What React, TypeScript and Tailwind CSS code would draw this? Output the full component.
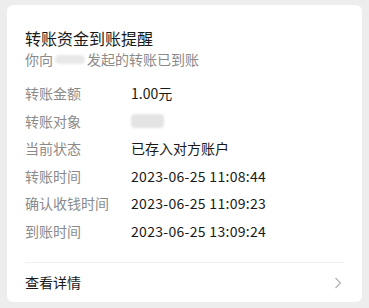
const FONT = "font-['PingFang_SC','Noto_Sans_CJK_SC',sans-serif]";

const rows: { label: string; value: string | null; mono?: boolean }[] = [
  { label: "转账金额", value: "1.00元" },
  { label: "转账对象", value: null },
  { label: "当前状态", value: "已存入对方账户" },
  { label: "转账时间", value: "2023-06-25 11:08:44", mono: true },
  { label: "确认收钱时间", value: "2023-06-25 11:09:23", mono: true },
  { label: "到账时间", value: "2023-06-25 13:09:24", mono: true },
];

export default function App() {
  return (
    <div className={`w-[369px] h-[308px] bg-[#ededed] pt-[5px] px-[7px] ${FONT}`}>
      <div className="w-[355px] h-[297px] bg-white rounded-[6px] px-[18px] pt-[22px] flex flex-col">
        <div className="h-[22px] leading-[22px] text-[16px] text-[#191919]">转账资金到账提醒</div>
        <div className="h-[20px] leading-[20px] text-[14px] text-[#8a8a8a] flex items-center">
          <span>你向</span>
          <span className="w-[30px] h-[9px] mx-[2px] rounded-full bg-[#e8e8e8] blur-[1px]" />
          <span>发起的转账已到账</span>
        </div>
        <div className="mt-[11px] flex flex-col">
          {rows.map((r) => (
            <div key={r.label} className="h-[27.5px] flex items-center text-[14px]">
              <span className="w-[106px] text-[#8a8a8a]">{r.label}</span>
              {r.value ? (
                <span className={`text-[#191919] ${r.mono ? "tracking-[0.3px]" : ""}`}>{r.value}</span>
              ) : (
                <span className="w-[33px] h-[14px] rounded-[4px] bg-[#e4e4e4] blur-[1px]" />
              )}
            </div>
          ))}
        </div>
        <div className="mt-[17px] h-px bg-[#f0f0f0]" />
        <div className="flex-1 flex items-center justify-between text-[14px] text-[#191919]">
          <span>查看详情</span>
          <svg width="8" height="12" viewBox="0 0 8 12" className="mr-[2px]">
            <path d="M1.5 1 L6.5 6 L1.5 11" fill="none" stroke="#b2b2b2" strokeWidth="1.2" />
          </svg>
        </div>
      </div>
    </div>
  );
}
